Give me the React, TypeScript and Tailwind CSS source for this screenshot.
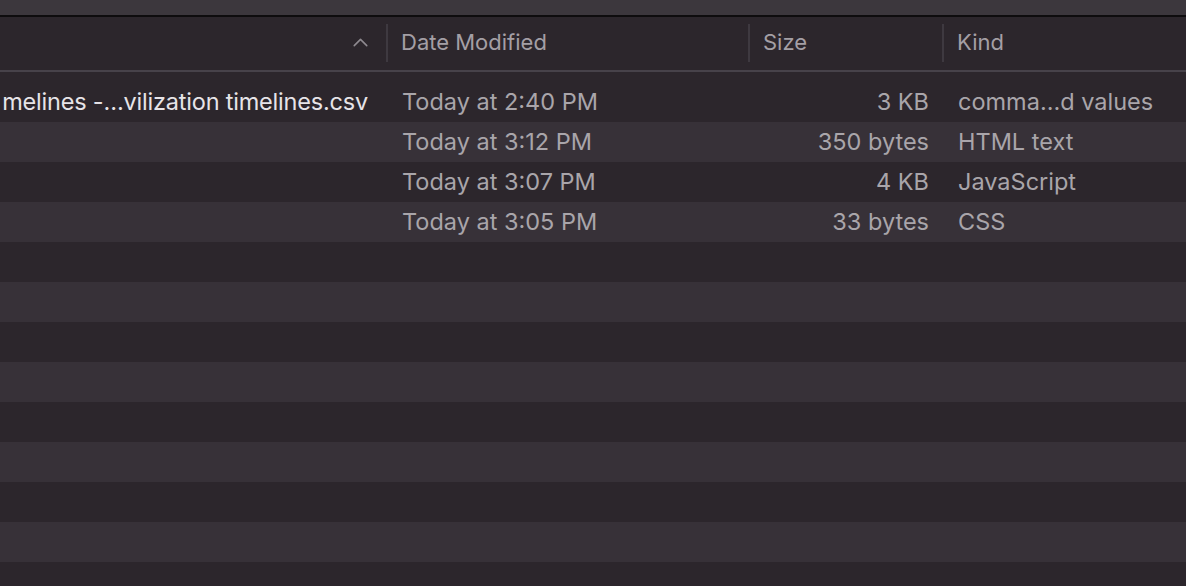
import { ChevronUp } from 'lucide-react';

type FileRow = {
  name: string;
  date: string;
  size: string;
  kind: string;
};

// the name column is scrolled left, so only the tail of the first name shows
const files: FileRow[] = [
  { name: 'melines -…vilization timelines.csv', date: 'Today at 2:40 PM', size: '3 KB', kind: 'comma…d values' },
  { name: '', date: 'Today at 3:12 PM', size: '350 bytes', kind: 'HTML text' },
  { name: '', date: 'Today at 3:07 PM', size: '4 KB', kind: 'JavaScript' },
  { name: '', date: 'Today at 3:05 PM', size: '33 bytes', kind: 'CSS' },
];

const emptyRows = 12;

function HeaderCell({ label, className }: { label: string; className: string }) {
  return (
    <div className={`flex h-full items-center ${className}`}>
      <div className="h-[38px] w-[2px] shrink-0 bg-[#3e3940]" />
      <span className="pl-[13px] text-[#a49fa5]">{label}</span>
    </div>
  );
}

function App() {
  return (
    <div
      className="flex h-[586px] w-[1186px] flex-col overflow-hidden bg-[#2c262c] text-[23.5px]"
      style={{ fontFamily: 'Inter, "Noto Sans", sans-serif' }}>
      <div className="h-[15px] shrink-0 bg-[#3c373d]" />
      <div className="h-[2px] shrink-0 bg-[#0e0c0e]" />
      <div className="flex h-[53px] shrink-0 items-center pb-[2px] text-[22px]">
        <div className="flex h-full w-[386px] shrink-0 items-center justify-end pr-[13px]">
          <ChevronUp className="h-[25px] w-[25px] text-[#8f8a90]" strokeWidth={1.5} />
        </div>
        <HeaderCell label="Date Modified" className="w-[362px] shrink-0" />
        <HeaderCell label="Size" className="w-[194px] shrink-0" />
        <HeaderCell label="Kind" className="flex-1" />
      </div>
      <div className="h-[2px] shrink-0 bg-[#47424a]" />
      <div className="h-[10px] shrink-0" />
      {files.map((f, idx) => (
        <div
          key={idx}
          className={`flex h-[40px] shrink-0 items-center ${idx % 2 === 1 ? 'bg-[#373138]' : 'bg-[#2c262c]'}`}>
          <div className="flex w-[387px] shrink-0 justify-end whitespace-nowrap pr-[19px] tracking-[-0.2px] text-[#e7e4e8]">
            {f.name}
          </div>
          <div className="w-[362px] shrink-0 pl-[15px] text-[#a9a5aa]">{f.date}</div>
          <div className="w-[194px] shrink-0 pr-[14px] text-right text-[#a9a5aa]">{f.size}</div>
          <div className="flex-1 pl-[15px] text-[#a9a5aa]">{f.kind}</div>
        </div>
      ))}
      {Array.from({ length: emptyRows }).map((_, idx) => (
        <div
          key={`e${idx}`}
          className={`h-[40px] shrink-0 ${(idx + files.length) % 2 === 1 ? 'bg-[#373138]' : 'bg-[#2c262c]'}`}
        />
      ))}
    </div>
  );
}

export default App;
